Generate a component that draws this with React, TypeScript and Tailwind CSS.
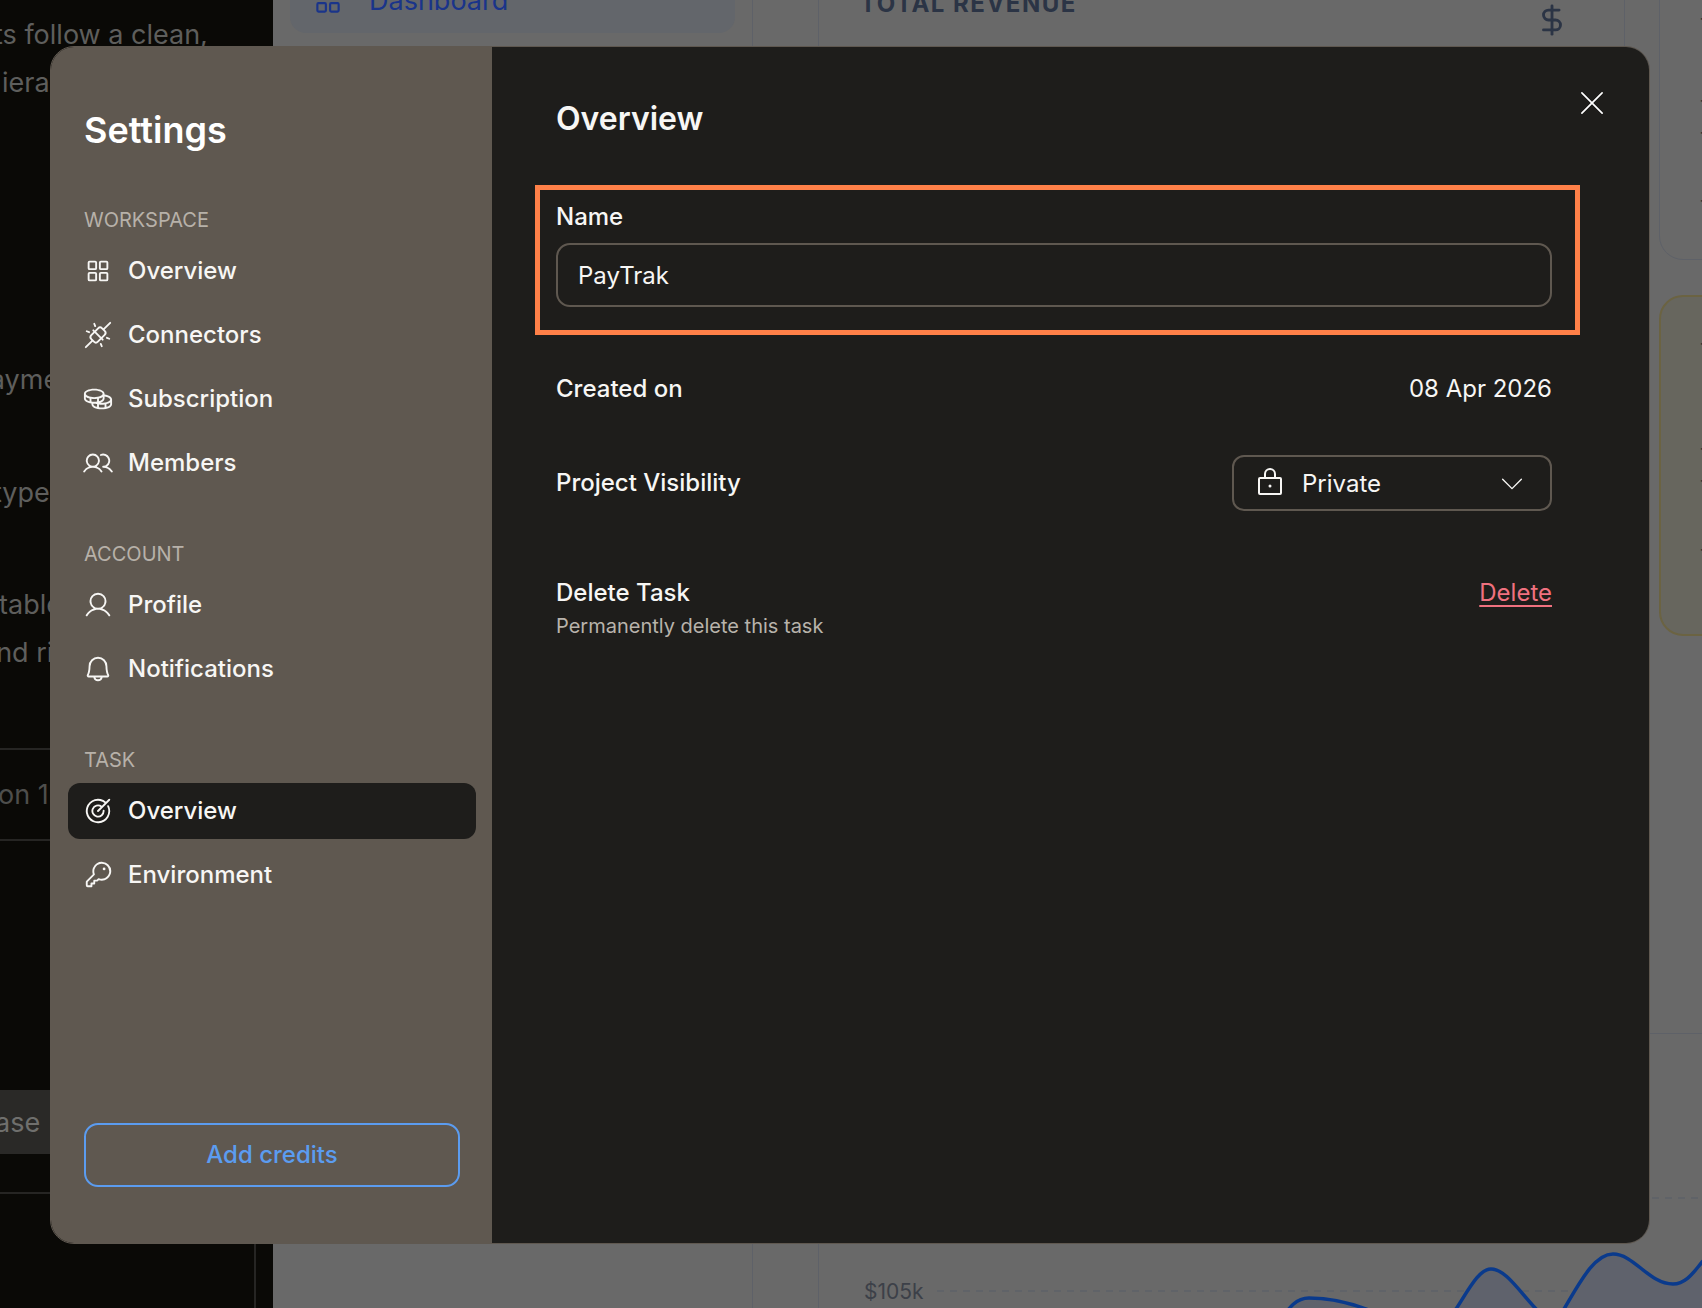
import type { IconType } from "react-icons";
import { DollarSign } from "lucide-react";
import {
  PiBell,
  PiCaretDownLight,
  PiCoins,
  PiKey,
  PiLock,
  PiPlugsConnected,
  PiSquaresFour,
  PiTarget,
  PiUser,
  PiUsers,
  PiXLight,
} from "react-icons/pi";

type NavItem = { label: string; icon: IconType; active?: boolean };

const workspaceItems: NavItem[] = [
  { label: "Overview", icon: PiSquaresFour },
  { label: "Connectors", icon: PiPlugsConnected },
  { label: "Subscription", icon: PiCoins },
  { label: "Members", icon: PiUsers },
];

const accountItems: NavItem[] = [
  { label: "Profile", icon: PiUser },
  { label: "Notifications", icon: PiBell },
];

const taskItems: NavItem[] = [
  { label: "Overview", icon: PiTarget, active: true },
  { label: "Environment", icon: PiKey },
];

const NavRow = ({ label, icon: Icon, active }: NavItem) => (
  <div
    className={`flex h-14 items-center gap-[15px] rounded-xl pl-[15px] text-[24px] font-medium text-[#f7f6f4] ${
      active ? "bg-[#1e1d1b]" : ""
    }`}
  >
    <Icon className="h-[30px] w-[30px] shrink-0" />
    <span>{label}</span>
  </div>
);

const NavLabel = ({ children }: { children: string }) => (
  <div className="pl-4 text-[20px] leading-6 text-[#b7b1a9]">{children}</div>
);

const BackgroundLeft = () => (
  <div className="flex h-full w-[273px] shrink-0 flex-col overflow-hidden bg-[#0a0906] text-[27px] leading-[48px] whitespace-nowrap text-[#5e5e5c]">
    <div className="-ml-[6px] mt-[11px]">ts follow a clean,</div>
    <div className="ml-[2px]">iera</div>
    <div className="-ml-[27px] mt-[249px]">payme</div>
    <div className="-ml-[7px] mt-[65px]">types</div>
    <div className="-ml-px mt-[64px]">table</div>
    <div className="-ml-[19px]">and ri</div>
    <div className="mt-[71px] h-[93px] w-[255px] border-y-2 border-[#262523] leading-[90px] text-[#4e4e4c]">
      <span className="-ml-[2px]">on 1</span>
    </div>
    <div className="mt-[249px] flex h-16 w-[255px] items-center bg-[#2a2927] pt-[2px] text-[#6f6f6d]">
      <span className="-ml-[5px]">ase</span>
    </div>
    <div className="mt-[38px] w-[256px] flex-1 border-t-2 border-r-2 border-[#262523]" />
  </div>
);

const BackgroundRight = () => (
  <div className="flex h-full flex-1 overflow-hidden bg-[#696969]">
    <div className="w-[480px] shrink-0 border-r border-[#5e6168] pl-[17px]">
      <div className="-mt-px flex h-[34px] w-[445px] overflow-hidden rounded-b-2xl bg-[#63666b] pl-[21px]">
        <div className="-mt-[13px] flex h-[30px] items-center gap-[24px] text-[27px] leading-[28px] text-[#1a348a]">
          <PiSquaresFour className="h-[34px] w-[34px] shrink-0" />
          <span>Dashboard</span>
        </div>
      </div>
    </div>
    <div className="w-[66px] shrink-0 border-r border-[#5e6168]" />
    <div className="flex flex-1 flex-col overflow-hidden">
      <div className="flex">
        <div className="flex h-[60px] w-[806px] shrink-0 justify-between border-r border-[#5e6168] pl-[41px] pr-[55px]">
          <div className="-mt-[10px] text-[24px] leading-[28px] font-bold tracking-[1.5px] text-[#2b3445]">TOTAL REVENUE</div>
          <DollarSign className="mt-[3px] h-[34px] w-[34px] shrink-0 text-[#2b3445]" />
        </div>
        <div className="ml-[34px] flex w-[200px] shrink-0 flex-col">
          <div className="-mt-px h-[261px] rounded-b-[24px] border border-[#5e6168] pl-[40px] text-[20px] leading-none text-[#333]">
            <div className="mt-[16px]">T</div>
            <div className="mt-[62px]">T</div>
            <div className="mt-[12px]">T</div>
            <div className="mt-[48px]">T</div>
          </div>
          <div className="mt-[35px] h-[341px] rounded-[24px] border-2 border-[#6b6342] bg-[#67665e] pl-[39px] text-[20px] leading-none text-[#333]">
            <div className="mt-[44px]">T</div>
            <div className="mt-[85px]">T</div>
            <div className="mt-[12px]">T</div>
            <div className="mt-[49px]">T</div>
          </div>
        </div>
      </div>
      <div className="relative mt-auto h-[275px] border-t border-[#5e6168]">
        <svg className="absolute inset-0" width="884" height="275" viewBox="0 0 884 275" fill="none">
          <path d="M118 164H884M118 257H884" stroke="#5e6168" strokeWidth="1.5" strokeDasharray="7 6" />
          <path
            d="M460 290C470 272 478 264 490 264C515 264 540 270 570 285C600 300 620 295 637 275C650 255 660 235 672 235C688 235 703 262 722 280C730 288 737 285 745 275C760 250 775 220 794 220C815 220 830 250 854 250C868 250 876 236 884 227V290Z"
            fill="#5f626c"
          />
          <path
            d="M460 290C470 272 478 264 490 264C515 264 540 270 570 285C600 300 620 295 637 275C650 255 660 235 672 235C688 235 703 262 722 280C730 288 737 285 745 275C760 250 775 220 794 220C815 220 830 250 854 250C868 250 876 236 884 227"
            stroke="#0a3a8c"
            strokeWidth="3.5"
          />
        </svg>
        <span className="absolute left-[45px] top-[245px] text-[21px] leading-[26px] text-[#3c4048]">$105k</span>
      </div>
    </div>
  </div>
);

const Sidebar = () => (
  <aside className="flex w-[441px] shrink-0 flex-col bg-[#5f5850] pb-[56px] pl-[17px] pr-4 pt-[61px]">
    <h2 className="pl-4 text-[36px] leading-[44px] font-semibold text-white">Settings</h2>
    <div className="mt-[56px]">
      <NavLabel>WORKSPACE</NavLabel>
    </div>
    <div className="mt-[11px] flex flex-col gap-2">
      {workspaceItems.map((item) => (
        <NavRow key={item.label} {...item} />
      ))}
    </div>
    <div className="mt-[51px]">
      <NavLabel>ACCOUNT</NavLabel>
    </div>
    <div className="mt-[11px] flex flex-col gap-2">
      {accountItems.map((item) => (
        <NavRow key={item.label} {...item} />
      ))}
    </div>
    <div className="mt-[51px]">
      <NavLabel>TASK</NavLabel>
    </div>
    <div className="mt-[11px] flex flex-col gap-2">
      {taskItems.map((item) => (
        <NavRow key={item.label} {...item} />
      ))}
    </div>
    <button className="mt-auto ml-4 h-16 w-[376px] rounded-[14px] border-2 border-[#5b9cf0] text-[24px] font-medium text-[#5b9cf0]">
      Add credits
    </button>
  </aside>
);

const MainPane = () => (
  <main className="relative flex-1 bg-[#1e1d1b] pl-16 pr-[97px] pt-[52px] text-[#f7f6f4]">
    <button className="absolute right-[39px] top-[38px] text-white">
      <PiXLight className="h-9 w-9" />
    </button>
    <h1 className="text-[32px] leading-10 font-semibold">Overview</h1>

    <div className="-ml-[21px] -mr-[28px] mt-[46px] h-[150px] border-[5px] border-[#ff8048] pl-4 pr-[23px] pt-[11px]">
      <div className="text-[24px] leading-8 font-medium">Name</div>
      <div className="mt-[10px] flex h-16 items-center rounded-[14px] border-2 border-[#5f5850] pl-5 pt-[2px] text-[24px]">PayTrak</div>
    </div>

    <div className="mt-[38px] flex justify-between text-[24px] leading-8">
      <span className="font-medium">Created on</span>
      <span>08 Apr 2026</span>
    </div>

    <div className="mt-[50px] flex items-center justify-between text-[24px]">
      <span className="font-medium">Project Visibility</span>
      <div className="flex h-14 w-[320px] items-center rounded-xl border-2 border-[#5f5850] pl-[20px] pr-[23px]">
        <PiLock className="h-8 w-8 shrink-0" />
        <span className="ml-4 flex-1 pt-[2px]">Private</span>
        <PiCaretDownLight className="h-[30px] w-[30px] shrink-0" />
      </div>
    </div>

    <div className="mt-[66px] flex items-start justify-between">
      <div>
        <div className="text-[24px] leading-8 font-medium">Delete Task</div>
        <div className="mt-[4px] text-[20px] leading-[26px] text-[#b8b3ab]">Permanently delete this task</div>
      </div>
      <a className="text-[24px] leading-8 text-[#f0717f] underline decoration-2 underline-offset-4">Delete</a>
    </div>
  </main>
);

const App = () => (
  <div className="relative flex h-[1308px] w-[1702px] overflow-hidden font-['Inter',sans-serif]">
    <BackgroundLeft />
    <BackgroundRight />
    <div className="absolute left-[50px] top-[46px] flex h-[1198px] w-[1600px] overflow-hidden rounded-[24px] border border-[#5f5850]">
      <Sidebar />
      <MainPane />
    </div>
  </div>
);

export default App;
